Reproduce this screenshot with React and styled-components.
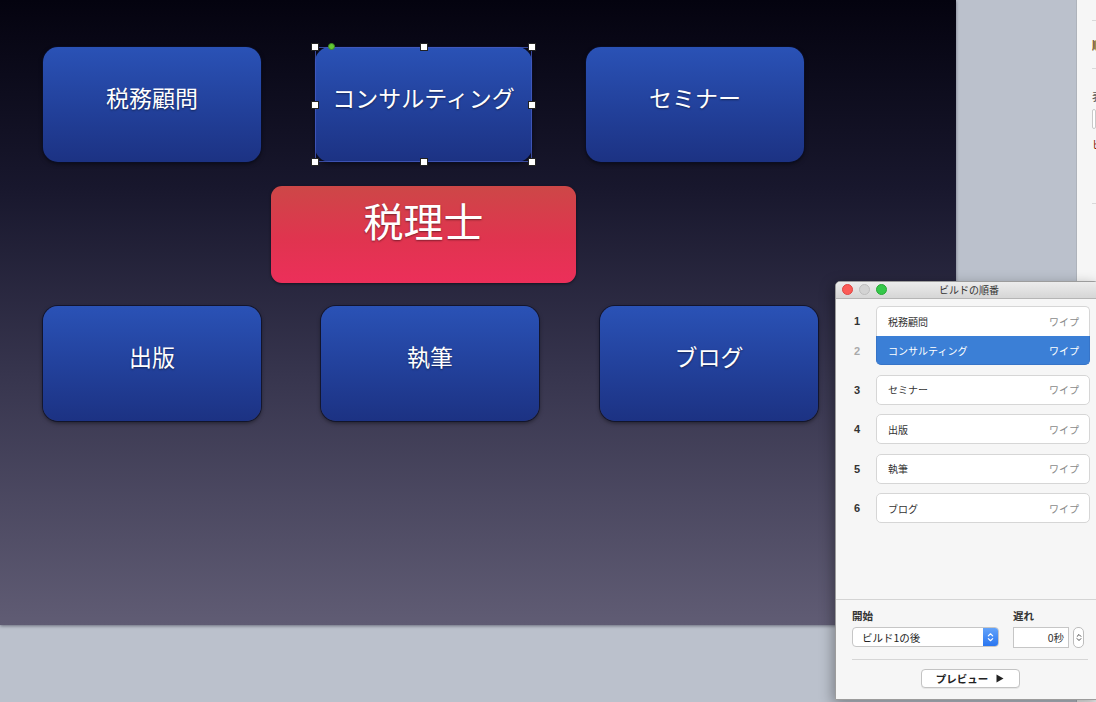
import styled, { createGlobalStyle } from "styled-components";

const GlobalStyle = createGlobalStyle`
  html, body {
    margin: 0;
    padding: 0;
    width: 1096px;
    height: 702px;
    overflow: hidden;
    font-family: "Noto Sans CJK JP", "Noto Sans", sans-serif;
  }
`;

const JP = `"Noto Sans CJK JP", "Noto Sans", sans-serif`;

const Screen = styled.div`
  position: relative;
  width: 1096px;
  height: 702px;
  display: flex;
  background: #bbc1cc;
  overflow: hidden;
`;

const Workspace = styled.div`
  width: 1076px;
  display: flex;
  flex-direction: column;
`;

const Slide = styled.div`
  position: relative;
  width: 956px;
  height: 625px;
  background: linear-gradient(180deg, #04030f 0%, #18172d 30%, #37354e 60%, #605c74 100%);
  box-shadow: 0 1px 3px rgba(40, 40, 60, 0.55);
`;

const Inspector = styled.div`
  flex: 1;
  background: #f6f6f6;
  border-left: 1px solid #aeb3bb;
  padding-top: 20px;
  display: flex;
  flex-direction: column;
  overflow: hidden;
  font-family: ${JP};
  font-size: 11px;
  white-space: nowrap;
`;

const InspectorRule = styled.div`
  height: 1px;
  background: #d9d9d9;
  margin: ${(p) => p.$top || 0}px 0 0 15px;
`;

const InspectorText = styled.div`
  margin-top: ${(p) => p.$top || 0}px;
  padding-left: 15px;
  color: ${(p) => p.$color || "#3a3a3a"};
  font-weight: ${(p) => (p.$bold ? 700 : 400)};
  line-height: 14px;
`;

const InspectorField = styled.div`
  margin: 6px 0 0 15px;
  height: 18px;
  border: 1px solid #c9c9c9;
  border-radius: 4px;
  background: #fff;
`;

const Shape = styled.div`
  position: absolute;
  display: flex;
  align-items: center;
  justify-content: center;
  box-sizing: border-box;
  color: #fff;
  font-family: ${JP};
  text-shadow: 0 1px 2px rgba(0, 0, 0, 0.45);
  white-space: nowrap;
  ${(p) =>
    p.$red
      ? `
    border-radius: 11px;
    background: linear-gradient(180deg, #cd4747 0%, #e0344f 55%, #ec2f5a 100%);
    font-size: 40px;
    padding-bottom: 30px;
    box-shadow: 0 1px 3px rgba(0,0,0,0.5);
  `
      : `
    border-radius: 15px;
    background: linear-gradient(180deg, #2a52b6 0%, #22409a 55%, #1c3283 100%);
    font-size: 23px;
    padding-bottom: 15px;
    box-shadow: 0 0 0 1px rgba(10,14,40,0.7), 0 2px 4px rgba(0,0,0,0.5);
  `}
`;

const SelectionFrame = styled.div`
  position: absolute;
  box-sizing: border-box;
  border: 1px solid rgba(70, 90, 190, 0.8);
  pointer-events: none;
`;

const Handle = styled.div`
  position: absolute;
  width: 6px;
  height: 6px;
  margin: -4px 0 0 -4px;
  background: #fff;
  border: 1px solid #222;
`;

const RotateDot = styled.div`
  position: absolute;
  width: 7px;
  height: 7px;
  margin: -4px 0 0 -4px;
  border-radius: 50%;
  background: #63c834;
  border: 1px solid #3e8a20;
  box-sizing: border-box;
`;

const BuildWindow = styled.div`
  position: absolute;
  left: 835px;
  top: 281px;
  width: 262px;
  height: 417px;
  display: flex;
  flex-direction: column;
  background: #f6f6f6;
  border: 1px solid #9c9c9c;
  border-radius: 5px 5px 0 0;
  box-shadow: -2px 4px 14px rgba(0, 0, 0, 0.35);
  overflow: hidden;
  font-family: ${JP};
`;

const TitleBar = styled.div`
  position: relative;
  height: 16px;
  flex: none;
  background: linear-gradient(180deg, #ececec 0%, #d6d6d6 100%);
  border-bottom: 1px solid #b5b5b5;
  display: flex;
  align-items: center;
  justify-content: center;
`;

const Lights = styled.div`
  position: absolute;
  left: 6px;
  top: 2px;
  display: flex;
  gap: 6px;
`;

const Light = styled.div`
  width: 11px;
  height: 11px;
  border-radius: 50%;
  box-sizing: border-box;
  background: ${(p) => p.$fill};
  border: 1px solid ${(p) => p.$edge};
`;

const Title = styled.div`
  font-size: 10px;
  color: #333;
  line-height: 12px;
  margin-left: 4px;
`;

const List = styled.div`
  flex: 1;
  padding: 7px 8px 0 0;
  display: flex;
  flex-direction: column;
  gap: 9.5px;
`;

const Group = styled.div`
  display: flex;
  flex-direction: column;
`;

const Row = styled.div`
  display: flex;
  align-items: center;
  height: ${(p) => (p.$h ? p.$h : 30)}px;
`;

const Num = styled.div`
  width: 40px;
  text-align: center;
  padding-left: 2px;
  box-sizing: border-box;
  font-size: 11px;
  font-weight: 700;
  color: ${(p) => (p.$dim ? "#a9a9a9" : "#333")};
  font-family: "Liberation Sans", Arial, sans-serif;
`;

const radiusFor = (pos) =>
  pos === "top" ? "5px 5px 0 0" : pos === "bottom" ? "0 0 5px 5px" : "5px";

const Cell = styled.div`
  flex: 1;
  height: 100%;
  box-sizing: border-box;
  display: flex;
  align-items: center;
  justify-content: space-between;
  padding: 0 10px 0 11px;
  font-size: 10px;
  border-radius: ${(p) => radiusFor(p.$pos)};
  background: ${(p) => (p.$selected ? "#3b7fd6" : "#fff")};
  color: ${(p) => (p.$selected ? "#fff" : "#333")};
  border: 1px solid ${(p) => (p.$selected ? "#3674c8" : "#d6d6d6")};
  ${(p) => (p.$pos === "top" ? "border-bottom: none;" : "")}
  ${(p) => (p.$pos === "bottom" ? "border-top: none;" : "")}
`;

const Effect = styled.span`
  color: ${(p) => (p.$selected ? "#fff" : "#8a8a8a")};
`;

const Footer = styled.div`
  flex: none;
  height: 100px;
  border-top: 1px solid #d4d4d4;
  padding: 10px 10px 0 16px;
  box-sizing: border-box;
  display: flex;
  flex-direction: column;
`;

const Controls = styled.div`
  display: flex;
  gap: 14px;
`;

const Field = styled.div`
  display: flex;
  flex-direction: column;
  gap: 5px;
`;

const Label = styled.div`
  font-size: 10.5px;
  font-weight: 700;
  color: #333;
  line-height: 12px;
`;

const Select = styled.div`
  width: 147px;
  height: 20px;
  box-sizing: border-box;
  display: flex;
  align-items: center;
  border: 1px solid #c6c6c6;
  border-radius: 4px;
  background: #fff;
  overflow: hidden;
  font-size: 10.5px;
  color: #222;
`;

const SelectText = styled.span`
  flex: 1;
  padding-left: 9px;
`;

const SelectArrows = styled.div`
  width: 15px;
  height: 100%;
  display: flex;
  align-items: center;
  justify-content: center;
  background: linear-gradient(180deg, #63a3fa 0%, #2a76f0 100%);
`;

const DelayRow = styled.div`
  display: flex;
  align-items: center;
  gap: 4px;
`;

const NumberInput = styled.div`
  width: 56px;
  height: 21px;
  box-sizing: border-box;
  border: 1px solid #c6c6c6;
  background: #fff;
  display: flex;
  align-items: center;
  justify-content: flex-end;
  padding-right: 4px;
  font-size: 10.5px;
  color: #333;
`;

const Stepper = styled.div`
  width: 11px;
  height: 21px;
  box-sizing: border-box;
  border: 1px solid #bdbdbd;
  border-radius: 5px;
  background: #fff;
  display: flex;
  align-items: center;
  justify-content: center;
`;

const Rule = styled.div`
  height: 1px;
  background: #d6d6d6;
  margin: 11px 0 0 0;
`;

const PreviewButton = styled.div`
  align-self: center;
  margin-top: 9px;
  width: 99px;
  height: 19px;
  box-sizing: border-box;
  border: 1px solid #c3c3c3;
  border-radius: 4px;
  background: #fff;
  box-shadow: 0 1px 0 rgba(0, 0, 0, 0.06);
  display: flex;
  align-items: center;
  justify-content: center;
  gap: 8px;
  font-size: 10.5px;
  font-weight: 700;
  color: #222;
`;

const shapes = [
  { text: "税務顧問", x: 43, y: 47, w: 218, h: 115 },
  { text: "コンサルティング", x: 315, y: 47, w: 217, h: 115 },
  { text: "セミナー", x: 586, y: 47, w: 218, h: 115 },
  { text: "税理士", x: 271, y: 186, w: 305, h: 97, red: true },
  { text: "出版", x: 43, y: 306, w: 218, h: 115 },
  { text: "執筆", x: 321, y: 306, w: 218, h: 115 },
  { text: "ブログ", x: 600, y: 306, w: 218, h: 115 },
];

const sel = { x: 315, y: 47, w: 217, h: 115 };
const handles = [
  [0, 0], [0.5, 0], [1, 0],
  [0, 0.5], [1, 0.5],
  [0, 1], [0.5, 1], [1, 1],
];

const builds = [
  { n: 3, text: "セミナー" },
  { n: 4, text: "出版" },
  { n: 5, text: "執筆" },
  { n: 6, text: "ブログ" },
];

function UpDown({ color, size = 8 }) {
  return (
    <svg width={size} height={size * 1.5} viewBox="0 0 8 12" fill="none">
      <path d="M1.5 4.5 L4 2 L6.5 4.5" stroke={color} strokeWidth="1.3" strokeLinecap="round" strokeLinejoin="round" />
      <path d="M1.5 7.5 L4 10 L6.5 7.5" stroke={color} strokeWidth="1.3" strokeLinecap="round" strokeLinejoin="round" />
    </svg>
  );
}

export default function App() {
  return (
    <Screen>
      <GlobalStyle />
      <Workspace>
        <Slide>
          {shapes.map((s) => (
            <Shape
              key={s.text}
              $red={s.red}
              style={{ left: s.x, top: s.y, width: s.w, height: s.h }}
            >
              {s.text}
            </Shape>
          ))}
          <SelectionFrame style={{ left: sel.x, top: sel.y, width: sel.w, height: sel.h }} />
          {handles.map(([fx, fy]) => (
            <Handle
              key={`${fx}-${fy}`}
              style={{ left: sel.x + fx * sel.w, top: sel.y + fy * sel.h }}
            />
          ))}
          <RotateDot style={{ left: 332, top: 47 }} />
        </Slide>
      </Workspace>
      <Inspector>
        <InspectorRule />
        <InspectorText $top={17} $bold $color="#6b4a10">順序</InspectorText>
        <InspectorRule $top={16} />
        <InspectorText $top={20} $color="#555">表示</InspectorText>
        <InspectorField />
        <InspectorText $top={8} $color="#8c1a10">ビルド</InspectorText>
        <InspectorRule $top={52} />
      </Inspector>

      <BuildWindow>
        <TitleBar>
          <Lights>
            <Light $fill="#fc5b57" $edge="#de4541" />
            <Light $fill="#d3d3d3" $edge="#bcbcbc" />
            <Light $fill="#35c84a" $edge="#26a834" />
          </Lights>
          <Title>ビルドの順番</Title>
        </TitleBar>
        <List>
          <Group>
            <Row $h={30}>
              <Num>1</Num>
              <Cell $pos="top">
                <span>税務顧問</span>
                <Effect>ワイプ</Effect>
              </Cell>
            </Row>
            <Row $h={29}>
              <Num $dim>2</Num>
              <Cell $pos="bottom" $selected>
                <span>コンサルティング</span>
                <Effect $selected>ワイプ</Effect>
              </Cell>
            </Row>
          </Group>
          {builds.map((b) => (
            <Row key={b.n}>
              <Num>{b.n}</Num>
              <Cell>
                <span>{b.text}</span>
                <Effect>ワイプ</Effect>
              </Cell>
            </Row>
          ))}
        </List>
        <Footer>
          <Controls>
            <Field>
              <Label>開始</Label>
              <Select>
                <SelectText>ビルド1の後</SelectText>
                <SelectArrows>
                  <UpDown color="#fff" size={7} />
                </SelectArrows>
              </Select>
            </Field>
            <Field>
              <Label>遅れ</Label>
              <DelayRow>
                <NumberInput>0秒</NumberInput>
                <Stepper>
                  <UpDown color="#444" size={6} />
                </Stepper>
              </DelayRow>
            </Field>
          </Controls>
          <Rule />
          <PreviewButton>
            <span>プレビュー</span>
            <svg width="8" height="9" viewBox="0 0 8 9">
              <path d="M0.5 0.5 L7.5 4.5 L0.5 8.5 Z" fill="#222" />
            </svg>
          </PreviewButton>
        </Footer>
      </BuildWindow>
    </Screen>
  );
}
